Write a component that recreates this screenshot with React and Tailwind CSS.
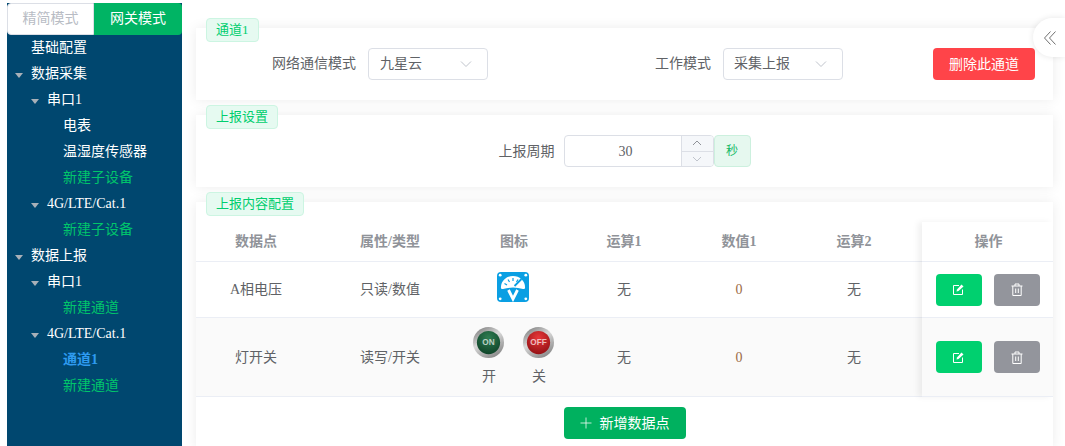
import React from "react";

const tree = [
  { label: "基础配置", level: 0 },
  { label: "数据采集", level: 0, caret: true },
  { label: "串口1", level: 1, caret: true },
  { label: "电表", level: 2 },
  { label: "温湿度传感器", level: 2 },
  { label: "新建子设备", level: 2, add: true },
  { label: "4G/LTE/Cat.1", level: 1, caret: true },
  { label: "新建子设备", level: 2, add: true },
  { label: "数据上报", level: 0, caret: true },
  { label: "串口1", level: 1, caret: true },
  { label: "新建通道", level: 2, add: true },
  { label: "4G/LTE/Cat.1", level: 1, caret: true },
  { label: "通道1", level: 2, active: true },
  { label: "新建通道", level: 2, add: true },
];

const levelPad = ["pl-[24px]", "pl-[40px]", "pl-[56px]"];

const font = "font-['Liberation_Serif','Noto_Sans_CJK_SC',serif]";

const cols = "grid grid-cols-[120px_148px_100px_120px_110px_120px_1fr]";

function Tag({ children }) {
  return (
    <div className="absolute left-[10px] top-[-10px] h-[24px] px-[9px] flex items-center text-[13px] text-[#00ce6e] bg-[#e6faf1] border border-[#ccf5e2] rounded-[4px]">
      {children}
    </div>
  );
}

function Select({ value, textClass = "" }) {
  return (
    <div className="w-[120px] h-[32px] flex items-center justify-between pl-[11px] pr-[15px] border border-[#dcdfe6] rounded-[4px] bg-white">
      <span className={`pb-[2px] ${textClass}`}>{value}</span>
      <svg width="12" height="8" viewBox="0 0 12 8" fill="none" stroke="#c0c4cc" strokeWidth="1">
        <path d="M1 1.5 L6 6.5 L11 1.5" />
      </svg>
    </div>
  );
}

function VoltIcon() {
  return (
    <svg width="32" height="30" viewBox="0 0 32 30" className="mr-[2px] mb-[6px]">
      <rect width="32" height="30" rx="4" fill="#0a9fe3" />
      <path d="M4 15 A12 11 0 0 1 28 15 Q28.5 17.5 26 17 Q16 14 6 17 Q3.5 17.5 4 15 Z" fill="#fff" />
      <path d="M7.5 11.5 L10 13 M11 7.5 L12.5 10 M16 6 L16 9 M21 7.5 L19.5 10" stroke="#0a9fe3" strokeWidth="1.2" />
      <path d="M24.5 7 L17.5 14" stroke="#0a9fe3" strokeWidth="1.8" />
      <path d="M11.5 18 L16 27 L20.5 18" fill="none" stroke="#fff" strokeWidth="2.8" />
      <circle cx="3.2" cy="3.2" r="1.4" fill="#fff" />
      <circle cx="28.8" cy="3.2" r="1.4" fill="#fff" />
      <circle cx="3.2" cy="26.8" r="1.4" fill="#fff" />
      <circle cx="28.8" cy="26.8" r="1.4" fill="#fff" />
    </svg>
  );
}

function SwitchIcon({ id, text, light, dark }) {
  return (
    <svg width="31" height="31" viewBox="0 0 32 32">
      <defs>
        <linearGradient id={id + "ring"} x1="0" y1="0" x2="0.6" y2="1">
          <stop offset="0" stopColor="#6f6f6f" />
          <stop offset="0.5" stopColor="#d8d8d8" />
          <stop offset="1" stopColor="#8f8f8f" />
        </linearGradient>
        <radialGradient id={id + "fill"} cx="0.5" cy="0.3" r="0.8">
          <stop offset="0" stopColor={light} />
          <stop offset="1" stopColor={dark} />
        </radialGradient>
      </defs>
      <circle cx="16" cy="16" r="16" fill={"url(#" + id + "ring)"} />
      <circle cx="16" cy="16" r="12" fill={"url(#" + id + "fill)"} />
      <text x="16" y="19" textAnchor="middle" fontSize="8.5" fontWeight="700" fontFamily="Liberation Sans, sans-serif" fill="#fff" fillOpacity="0.7">
        {text}
      </text>
    </svg>
  );
}

function EditButton() {
  return (
    <button className="w-[46px] h-[32px] flex items-center justify-center rounded-[4px] bg-[#00d06f]">
      <svg width="11" height="11" viewBox="0 0 11 11" fill="none" stroke="#fff" strokeWidth="1">
        <path d="M6 1.5 H0.5 V10.5 H9.5 V5.5" />
        <path d="M3.5 7.5 L4 5.5 L8.5 0.5 L10.5 2.5 L5.5 7 Z" fill="#fff" stroke="none" />
      </svg>
    </button>
  );
}

function DeleteButton() {
  return (
    <button className="w-[46px] h-[32px] flex items-center justify-center rounded-[4px] bg-[#93959c]">
      <svg width="12" height="13" viewBox="0 0 12 13" fill="none" stroke="#fff" strokeWidth="1">
        <path d="M0.5 3 H11.5 M4 3 V1 H8 V3 M1.8 3 V12.5 H10.2 V3 M4.7 5.5 V10 M7.3 5.5 V10" />
      </svg>
    </button>
  );
}

function Row({ name, type, icon, height, striped }) {
  return (
    <div className={`${cols} items-center ${height} border-b border-[#ebeef5] ${striped ? "bg-[#fafafa]" : "bg-white"} text-center`}>
      <div>{name}</div>
      <div>{type}</div>
      <div className="flex justify-center">{icon}</div>
      <div>无</div>
      <div className="text-[#9c6b45]">0</div>
      <div>无</div>
      <div />
    </div>
  );
}

export default function App() {
  return (
    <div className={`relative flex h-[446px] w-[1065px] overflow-hidden bg-white text-[14px] text-[#606266] ${font}`}>
      {/* Sidebar */}
      <div className="ml-[7px] mt-[3px] w-[175px] bg-[#00476f] flex flex-col">
        <div className="flex h-[32px] text-center leading-[32px]">
          <div className="w-[87px] bg-white text-[#b8bcc4] border border-[#dcdfe6] rounded-l-[4px] leading-[30px]">精简模式</div>
          <div className="flex-1 bg-[#00b464] text-white rounded-r-[4px]">网关模式</div>
        </div>
        {tree.map((item, i) => (
          <div
            key={i}
            className={`relative h-[26px] leading-[26px] ${levelPad[item.level]} ${item.add ? "text-[#00c56b]" : item.active ? "text-[#2e9bf0] font-bold" : "text-white"}`}
          >
            {item.caret && (
              <span className="absolute top-[12px] ml-[-16px] border-x-[4px] border-t-[5px] border-x-transparent border-t-[#a8b0b8]" />
            )}
            {item.label}
          </div>
        ))}
      </div>

      {/* Main */}
      <div className="ml-[14px] mt-[28px] w-[857px] flex flex-col gap-[15px]">
        <div className="relative shrink-0 h-[72px] flex items-center pl-[76px] bg-white shadow-[0_0_12px_rgba(0,0,0,0.08)]">
          <Tag>通道1</Tag>
          <span className="mr-[12px] pb-[2px]">网络通信模式</span>
          <Select value="九星云" />
          <span className="ml-[167px] mr-[12px] pb-[2px]">工作模式</span>
          <Select value="采集上报" textClass="-ml-px" />
          <button className="ml-[90px] w-[102px] h-[32px] rounded-[4px] bg-[#ff4449] text-white">删除此通道</button>
        </div>

        <div className="relative shrink-0 h-[72px] flex items-center justify-center bg-white shadow-[0_0_12px_rgba(0,0,0,0.08)]">
          <Tag>上报设置</Tag>
          <span className="mr-[9px]">上报周期</span>
          <div className="w-[150px] h-[32px] flex border border-[#dcdfe6] rounded-[4px] overflow-hidden">
            <div className="flex-1 flex items-center justify-center pl-[6px]">30</div>
            <div className="w-[32px] flex flex-col border-l border-[#dcdfe6] bg-[#f5f7fa]">
              <div className="flex-1 flex items-center justify-center border-b border-[#dcdfe6]">
                <svg width="10" height="6" viewBox="0 0 10 6" fill="none" stroke="#909399"><path d="M1 5 L5 1 L9 5" /></svg>
              </div>
              <div className="flex-1 flex items-center justify-center">
                <svg width="10" height="6" viewBox="0 0 10 6" fill="none" stroke="#c0c4cc"><path d="M1 1 L5 5 L9 1" /></svg>
              </div>
            </div>
          </div>
          <div className="w-[37px] h-[32px] flex items-center justify-center text-[12px] text-[#14b866] bg-[#e6f8ef] border border-[#ccf0de] rounded-[4px]">秒</div>
        </div>

        <div className="relative shrink-0 bg-white shadow-[0_0_12px_rgba(0,0,0,0.08)] pt-[20px] pb-[10px]">
          <Tag>上报内容配置</Tag>
          <div className={`${cols} items-center h-[40px] border-b border-[#ebeef5] text-center font-bold text-[#909399]`}>
            <div>数据点</div>
            <div>属性/类型</div>
            <div>图标</div>
            <div>运算1</div>
            <div>数值1</div>
            <div>运算2</div>
            <div />
          </div>
          <Row name="A相电压" type="只读/数值" icon={<VoltIcon />} height="h-[56px]" />
          <Row
            name="灯开关"
            type="读写/开关"
            striped
            height="h-[79px]"
            icon={
              <div className="flex gap-[19px] text-center mr-[2px]">
                <div className="flex flex-col items-center gap-[8px]">
                  <SwitchIcon id="on" text="ON" light="#2f7d52" dark="#0b3d24" />
                  <span className="pl-[2px]">开</span>
                </div>
                <div className="flex flex-col items-center gap-[8px]">
                  <SwitchIcon id="off" text="OFF" light="#e8383a" dark="#8a0c10" />
                  <span className="pl-[2px]">关</span>
                </div>
              </div>
            }
          />
          <div className="flex justify-center pt-[10px]">
            <button className="w-[122px] h-[32px] flex items-center justify-center gap-[8px] rounded-[4px] bg-[#00b15f] text-white">
              <svg width="12" height="12" viewBox="0 0 12 12" stroke="#fff" strokeOpacity="0.75" strokeWidth="1"><path d="M6 0.5 V11.5 M0.5 6 H11.5" /></svg>
              新增数据点
            </button>
          </div>

          {/* fixed action column */}
          <div className="absolute right-0 top-[20px] w-[131px] bg-white shadow-[-4px_0_6px_rgba(0,0,0,0.06)]">
            <div className="h-[40px] flex items-center justify-center pl-[2px] border-b border-[#ebeef5] font-bold text-[#909399]">操作</div>
            <div className="h-[56px] flex items-center justify-center gap-[12px] border-b border-[#ebeef5]">
              <EditButton />
              <DeleteButton />
            </div>
            <div className="h-[79px] flex items-center justify-center gap-[12px] border-b border-[#ebeef5] bg-[#fafafa]">
              <EditButton />
              <DeleteButton />
            </div>
          </div>
        </div>
      </div>

      {/* Collapse handle */}
      <div className="absolute right-0 top-[18px] w-[32px] h-[39px] flex items-center justify-center pl-[2px] bg-white rounded-l-[20px] shadow-[0_0_6px_rgba(0,0,0,0.1)]">
        <svg width="12" height="14" viewBox="0 0 12 14" fill="none" stroke="#707070" strokeWidth="1">
          <path d="M6.5 0.5 L0.5 7 L6.5 13.5 M11.5 0.5 L5.5 7 L11.5 13.5" />
        </svg>
      </div>
    </div>
  );
}
